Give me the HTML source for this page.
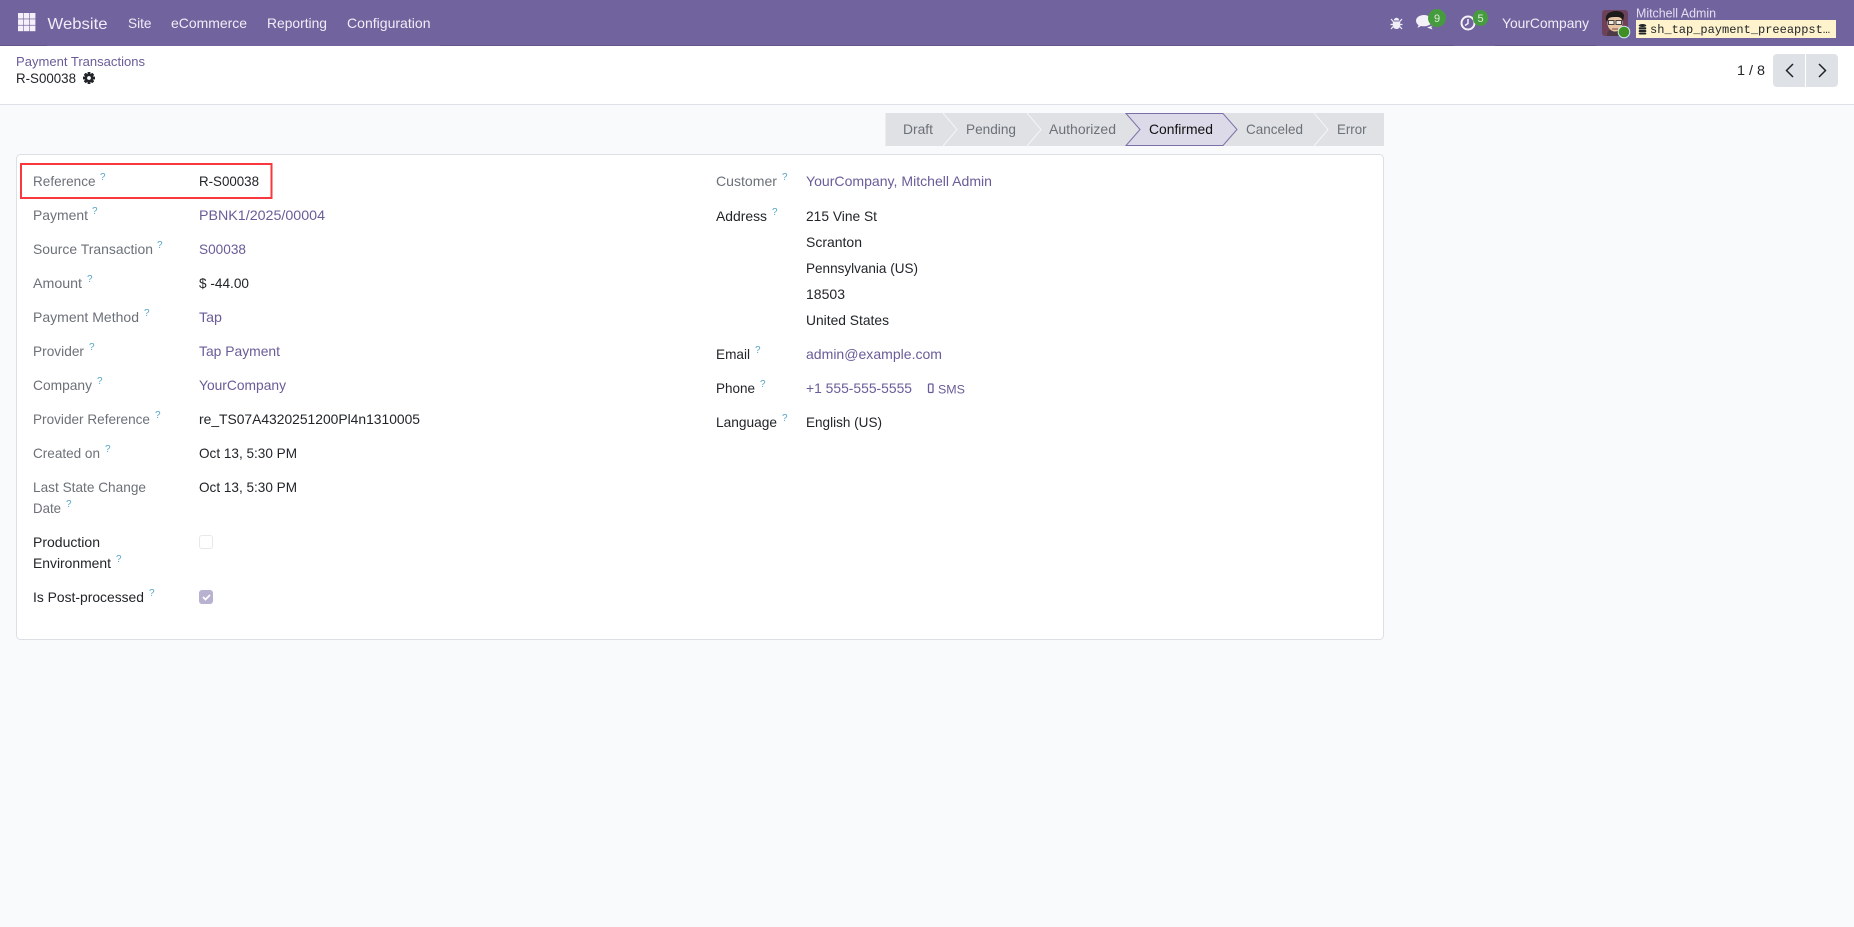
<!DOCTYPE html>
<html lang="en"><head><meta charset="utf-8"><title>R-S00038 - Payment Transactions</title>
<style>
html,body{margin:0;padding:0;width:1854px;height:927px;overflow:hidden;background:#f9fafb}
svg{display:block}
text{font-family:"Liberation Sans",sans-serif;font-size:14px;fill:#212529}
.n{fill:#f0edf6}
.l{fill:#6c7178}
.a{fill:#6a5c98}
.q{font-size:10px;fill:#57a5c9}
.s{fill:#6c7178}
</style></head><body>
<svg xmlns="http://www.w3.org/2000/svg" width="1854" height="927" viewBox="0 0 1854 927">
<rect width="1854" height="927" fill="#f9fafb"/>
<!-- navbar -->
<rect width="1854" height="46" fill="#71639e"/>
<path d="M0 45.5H47M440 45.5H1454M1495 45.5H1596" stroke="#62568b" stroke-width="1"/>
<g fill="#f4eff8">
<rect x="18" y="13" width="5.400" height="5.600"/><rect x="24" y="13" width="5.400" height="5.600"/><rect x="30" y="13" width="5.400" height="5.600"/>
<rect x="18" y="19.300" width="5.400" height="5.600"/><rect x="24" y="19.300" width="5.400" height="5.600"/><rect x="30" y="19.300" width="5.400" height="5.600"/>
<rect x="18" y="25.600" width="5.400" height="5.600"/><rect x="24" y="25.600" width="5.400" height="5.600"/><rect x="30" y="25.600" width="5.400" height="5.600"/>
</g>
<text class="n" x="47.500" y="29" style="font-size:16px" textLength="60" lengthAdjust="spacingAndGlyphs">Website</text>
<text class="n" x="128" y="28" textLength="23.500" lengthAdjust="spacingAndGlyphs">Site</text>
<text class="n" x="171" y="28" textLength="76" lengthAdjust="spacingAndGlyphs">eCommerce</text>
<text class="n" x="267" y="28" textLength="60" lengthAdjust="spacingAndGlyphs">Reporting</text>
<text class="n" x="347" y="28" textLength="83.500" lengthAdjust="spacingAndGlyphs">Configuration</text>
<!-- bug -->
<g fill="#f0edf6" stroke="#f0edf6">
<path d="M1392.800 21.500h7.400v3.500c0 2.500-1.600 4-3.700 4s-3.700-1.500-3.700-4z" stroke="none"/>
<path d="M1393.800 20.500a2.700 2.700 0 0 1 5.400 0z" stroke="none"/>
<path d="M1391 19l2.200 2.500M1402 19l-2.200 2.500M1390.500 24.500h3M1402.500 24.500h-3M1391 29l2.200-2.500M1402 29l-2.200-2.500" fill="none" stroke-width="1.200"/>
</g>
<!-- chat -->
<path d="M1424 15c-4.500 0-8 2.500-8 5.800 0 1.800 1 3.300 2.600 4.300l-1.100 2.800 3.500-1.900c1 .2 2 .3 3 .3 4.500 0 8-2.300 8-5.300 0-3.300-3.500-6-8-6z" fill="#f4f2f8"/>
<path d="M1427 27.500l5.500 2-1.300-2.500 1.800-1.500z" fill="#f4f2f8"/>
<circle cx="1437" cy="18" r="9" fill="#479b3f"/>
<text x="1437" y="22" text-anchor="middle" style="font-size:11px;fill:#dcefd8">9</text>
<!-- clock -->
<circle cx="1468" cy="23" r="6.500" fill="none" stroke="#f4f2f8" stroke-width="2"/>
<path d="M1468 19v4.500l-3 2" fill="none" stroke="#f4f2f8" stroke-width="1.500"/>
<rect x="1473" y="10" width="15" height="16" rx="7.500" fill="#479b3f"/>
<text x="1480.500" y="22" text-anchor="middle" style="font-size:11px;fill:#dcefd8">5</text>
<text class="n" x="1502" y="28" textLength="87" lengthAdjust="spacingAndGlyphs">YourCompany</text>
<!-- avatar -->
<rect x="1602" y="10" width="26" height="26" rx="3" fill="#6c4159"/>
<path d="M1607 36c0-4 2-7 6-7h4c4 0 6 3 6 7z" fill="#4d3a44"/>
<ellipse cx="1615" cy="23" rx="7.500" ry="8.500" fill="#e8c4a3"/>
<path d="M1606 20c-1-6 4-9 10-9 5 0 8 2 8 5l-1 5c-1-3-3-4-6-4-4 0-8 0-9 2l-1 3z" fill="#1d1a1b"/>
<rect x="1608.500" y="20.500" width="5.500" height="4" fill="#f2e8de" stroke="#444" stroke-width="1"/>
<rect x="1616" y="20.500" width="5.500" height="4" fill="#f2e8de" stroke="#444" stroke-width="1"/>
<path d="M1612 29h6" stroke="#7c4a3a" stroke-width="1"/>
<circle cx="1624" cy="32" r="5.800" fill="#3f8f22" stroke="#cfe6ea" stroke-width="1"/>
<text class="n" x="1636" y="17.500" style="font-size:13px;fill:#e3def0" textLength="80" lengthAdjust="spacingAndGlyphs">Mitchell Admin</text>
<rect x="1636" y="20" width="200" height="18" fill="#fff3cd"/>
<g fill="#212529"><ellipse cx="1642.500" cy="25.500" rx="3.800" ry="1.500"/><rect x="1638.700" y="27.300" width="7.600" height="2.200" rx="1"/><rect x="1638.700" y="30" width="7.600" height="2.200" rx="1"/><rect x="1638.700" y="32.700" width="7.600" height="1.800" rx="1"/></g>
<text x="1650" y="33" style="font-family:'Liberation Mono',monospace;font-size:12px">sh_tap_payment_preeappst…</text>
<!-- control panel -->
<rect y="46" width="1854" height="58" fill="#fff"/>
<rect y="104" width="1854" height="1" fill="#dee2e8"/>
<text class="a" x="16" y="66" style="font-size:13px" textLength="129" lengthAdjust="spacingAndGlyphs">Payment Transactions</text>
<text x="16" y="83" textLength="60" lengthAdjust="spacingAndGlyphs">R-S00038</text>
<g transform="translate(89 78)" fill="#212529"><circle r="4.300"/><g><rect x="-1.500" y="-6" width="3" height="12" rx=".6"/><rect x="-1.500" y="-6" width="3" height="12" rx=".6" transform="rotate(45)"/><rect x="-1.500" y="-6" width="3" height="12" rx=".6" transform="rotate(90)"/><rect x="-1.500" y="-6" width="3" height="12" rx=".6" transform="rotate(135)"/></g><circle r="1.900" fill="#fff"/></g>
<text x="1737" y="75" textLength="28" lengthAdjust="spacingAndGlyphs">1 / 8</text>
<path d="M1777 54h28v33h-28a4 4 0 0 1-4-4v-25a4 4 0 0 1 4-4z" fill="#dee1e5"/>
<path d="M1806 54h28a4 4 0 0 1 4 4v25a4 4 0 0 1-4 4h-28z" fill="#dee1e5"/>
<path d="M1793 64l-6.500 6.500 6.500 6.500M1819 64l6.500 6.500-6.500 6.500" fill="none" stroke="#212529" stroke-width="1.500"/>
<!-- statusbar -->
<rect x="885.500" y="113" width="498.500" height="33" fill="#dfe1e5"/>
<path d="M943 113l14 16.500-14 16.500M1027 113l14 16.500-14 16.500M1314 113l14 16.500-14 16.500" fill="none" stroke="#f4f5f7" stroke-width="1"/>
<path d="M1126 113.500H1223l14 16-14 16h-97l14-16z" fill="#dcd9e8" stroke="#7d70a8" stroke-width="1"/>
<text class="s" x="903" y="134" textLength="30" lengthAdjust="spacingAndGlyphs">Draft</text>
<text class="s" x="966" y="134" textLength="50" lengthAdjust="spacingAndGlyphs">Pending</text>
<text class="s" x="1049" y="134" textLength="67" lengthAdjust="spacingAndGlyphs">Authorized</text>
<text x="1149" y="134" style="fill:#111" textLength="64" lengthAdjust="spacingAndGlyphs">Confirmed</text>
<text class="s" x="1246" y="134" textLength="57" lengthAdjust="spacingAndGlyphs">Canceled</text>
<text class="s" x="1337" y="134" textLength="29.500" lengthAdjust="spacingAndGlyphs">Error</text>
<!-- card -->
<rect x="16.500" y="154.500" width="1367" height="485" rx="4" fill="#fff" stroke="#dcdfe5" stroke-width="1"/>
<rect x="21" y="164" width="250.500" height="34" fill="none" stroke="#f8383c" stroke-width="2"/>
<!-- left labels -->
<text class="l" x="33" y="186" textLength="62.500" lengthAdjust="spacingAndGlyphs">Reference</text><text class="q" x="100" y="180">?</text>
<text class="l" x="33" y="220" textLength="55" lengthAdjust="spacingAndGlyphs">Payment</text><text class="q" x="92" y="214">?</text>
<text class="l" x="33" y="254" textLength="120" lengthAdjust="spacingAndGlyphs">Source Transaction</text><text class="q" x="157" y="248">?</text>
<text class="l" x="33" y="288" textLength="49" lengthAdjust="spacingAndGlyphs">Amount</text><text class="q" x="87" y="282">?</text>
<text class="l" x="33" y="322" textLength="106" lengthAdjust="spacingAndGlyphs">Payment Method</text><text class="q" x="144" y="316">?</text>
<text class="l" x="33" y="356" textLength="51" lengthAdjust="spacingAndGlyphs">Provider</text><text class="q" x="89" y="350">?</text>
<text class="l" x="33" y="390" textLength="59" lengthAdjust="spacingAndGlyphs">Company</text><text class="q" x="97" y="384">?</text>
<text class="l" x="33" y="424" textLength="117" lengthAdjust="spacingAndGlyphs">Provider Reference</text><text class="q" x="155" y="418">?</text>
<text class="l" x="33" y="458" textLength="67" lengthAdjust="spacingAndGlyphs">Created on</text><text class="q" x="105" y="452">?</text>
<text class="l" x="33" y="492" textLength="113" lengthAdjust="spacingAndGlyphs">Last State Change</text>
<text class="l" x="33" y="513" textLength="28" lengthAdjust="spacingAndGlyphs">Date</text><text class="q" x="66" y="507">?</text>
<text x="33" y="547" textLength="67" lengthAdjust="spacingAndGlyphs">Production</text>
<text x="33" y="568" textLength="78" lengthAdjust="spacingAndGlyphs">Environment</text><text class="q" x="116" y="562">?</text>
<text x="33" y="602" textLength="111" lengthAdjust="spacingAndGlyphs">Is Post-processed</text><text class="q" x="149" y="596">?</text>
<!-- left values -->
<text x="199" y="186" textLength="60" lengthAdjust="spacingAndGlyphs">R-S00038</text>
<text class="a" x="199" y="220" textLength="126" lengthAdjust="spacingAndGlyphs">PBNK1/2025/00004</text>
<text class="a" x="199" y="254" textLength="47" lengthAdjust="spacingAndGlyphs">S00038</text>
<text x="199" y="288" textLength="50" lengthAdjust="spacingAndGlyphs">$ -44.00</text>
<text class="a" x="199" y="322" textLength="23" lengthAdjust="spacingAndGlyphs">Tap</text>
<text class="a" x="199" y="356" textLength="81" lengthAdjust="spacingAndGlyphs">Tap Payment</text>
<text class="a" x="199" y="390" textLength="87" lengthAdjust="spacingAndGlyphs">YourCompany</text>
<text x="199" y="424" textLength="221" lengthAdjust="spacingAndGlyphs">re_TS07A4320251200Pl4n1310005</text>
<text x="199" y="458" textLength="98" lengthAdjust="spacingAndGlyphs">Oct 13, 5:30 PM</text>
<text x="199" y="492" textLength="98" lengthAdjust="spacingAndGlyphs">Oct 13, 5:30 PM</text>
<rect x="199.500" y="535.500" width="13" height="13" rx="2.500" fill="#fff" stroke="#e6e8eb"/>
<rect x="199" y="590" width="14" height="14" rx="3" fill="#b8b1d0"/>
<path d="M203 597l2.500 2.500 4.500-4.500" fill="none" stroke="#fff" stroke-width="1.800"/>
<!-- right labels -->
<text class="l" x="716" y="186" textLength="61" lengthAdjust="spacingAndGlyphs">Customer</text><text class="q" x="782" y="180">?</text>
<text x="716" y="221" textLength="51" lengthAdjust="spacingAndGlyphs">Address</text><text class="q" x="772" y="215">?</text>
<text x="716" y="359" textLength="34" lengthAdjust="spacingAndGlyphs">Email</text><text class="q" x="755" y="353">?</text>
<text x="716" y="393" textLength="39" lengthAdjust="spacingAndGlyphs">Phone</text><text class="q" x="760" y="387">?</text>
<text x="716" y="427" textLength="61" lengthAdjust="spacingAndGlyphs">Language</text><text class="q" x="782" y="421">?</text>
<!-- right values -->
<text class="a" x="806" y="186" textLength="186" lengthAdjust="spacingAndGlyphs">YourCompany, Mitchell Admin</text>
<text x="806" y="221" textLength="71" lengthAdjust="spacingAndGlyphs">215 Vine St</text>
<text x="806" y="247" textLength="56" lengthAdjust="spacingAndGlyphs">Scranton</text>
<text x="806" y="273" textLength="112" lengthAdjust="spacingAndGlyphs">Pennsylvania (US)</text>
<text x="806" y="299" textLength="39" lengthAdjust="spacingAndGlyphs">18503</text>
<text x="806" y="325" textLength="83" lengthAdjust="spacingAndGlyphs">United States</text>
<text class="a" x="806" y="359" textLength="136" lengthAdjust="spacingAndGlyphs">admin@example.com</text>
<text class="a" x="806" y="393" textLength="106" lengthAdjust="spacingAndGlyphs">+1 555-555-5555</text>
<rect x="928.500" y="384" width="4.500" height="8.500" rx="1" fill="none" stroke="#6a5c98" stroke-width="1.300"/>
<text class="a" x="938" y="393.500" style="font-size:12px" textLength="27" lengthAdjust="spacingAndGlyphs">SMS</text>
<text x="806" y="427" textLength="76" lengthAdjust="spacingAndGlyphs">English (US)</text>
</svg>
</body></html>
